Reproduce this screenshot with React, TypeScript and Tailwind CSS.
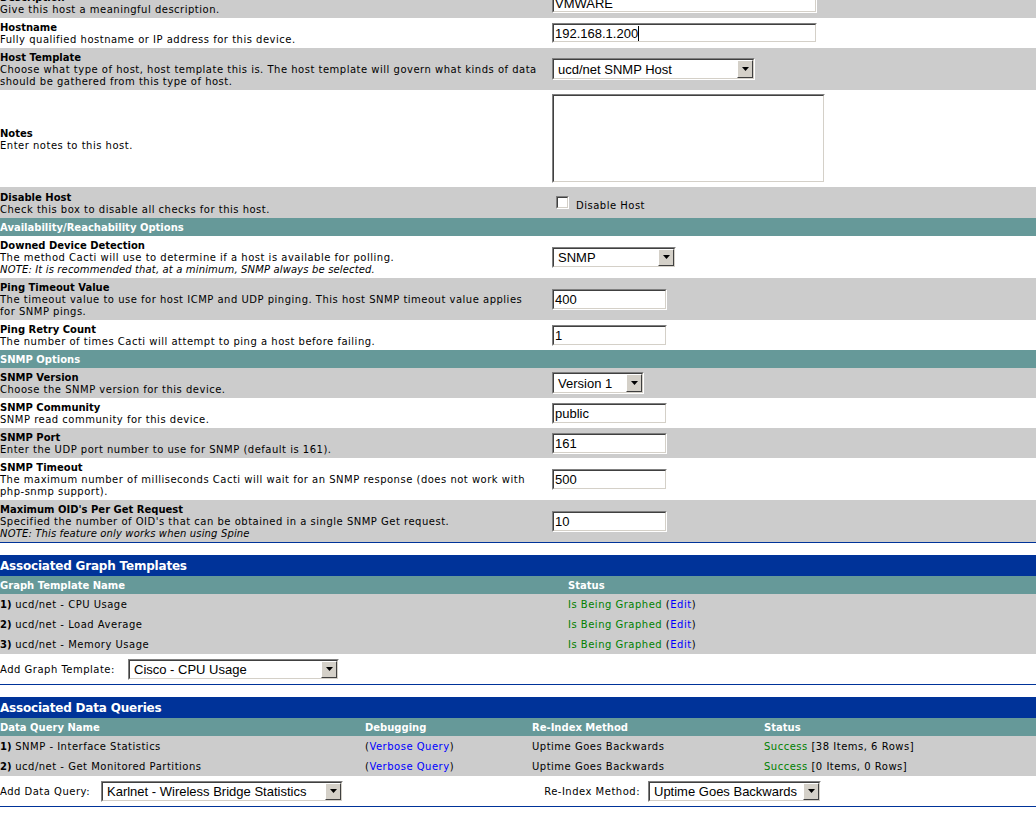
import React from "react";

function Arrow() {
  return (
    <div className="w-[16px] h-full bg-[#d4d0c8] border border-t-[#ffffff] border-l-[#ffffff] border-r-[#404040] border-b-[#404040] flex items-center justify-center">
      <svg width="7" height="4" viewBox="0 0 7 4">
        <path d="M0 0 H7 L3.5 4 Z" fill="#000" />
      </svg>
    </div>
  );
}

function Select({ className, text }: { className: string; text: string }) {
  return (
    <div className={`flex shrink-0 border border-t-[#808080] border-l-[#808080] border-r-[#ffffff] border-b-[#ffffff] ${className}`}>
      <div className="flex-1 flex border border-t-[#404040] border-l-[#404040] border-r-[#d4d0c8] border-b-[#d4d0c8] bg-white">
        <div className="flex-1 flex items-center pl-[4px] font-['Liberation_Sans',Arial,sans-serif] text-[13px] leading-[15px] tracking-normal text-black whitespace-nowrap overflow-hidden">
          {text}
        </div>
        <Arrow />
      </div>
    </div>
  );
}

function Input({ className, text, cursor }: { className: string; text: string; cursor?: boolean }) {
  return (
    <div className={`flex shrink-0 border border-t-[#808080] border-l-[#808080] border-r-[#ffffff] border-b-[#ffffff] ${className}`}>
      <div className="flex-1 flex items-center border border-t-[#404040] border-l-[#404040] border-r-[#d4d0c8] border-b-[#d4d0c8] bg-white pl-[1px] font-['Liberation_Sans',Arial,sans-serif] text-[13px] leading-[15px] tracking-normal text-black whitespace-nowrap overflow-hidden">
        {text}
        {cursor && <span className="w-px h-[15px] bg-black" />}
      </div>
    </div>
  );
}

function FormRow({
  gray,
  h,
  lines,
  children,
  extra,
}: {
  gray?: boolean;
  h: string;
  lines: React.ReactNode;
  children?: React.ReactNode;
  extra?: string;
}) {
  return (
    <div className={`flex items-center ${gray ? "bg-[#cccccc]" : "bg-white"} ${h} ${extra ?? ""}`}>
      <div className="w-[552px] shrink-0 pr-[3px] pt-[2px] whitespace-nowrap">{lines}</div>
      <div className="flex-1 flex items-center">{children}</div>
    </div>
  );
}

function T({ children }: { children: React.ReactNode }) {
  return <div className="font-bold tracking-normal">{children}</div>;
}

function Note({ children }: { children: React.ReactNode }) {
  return <div className="italic tracking-[0.15px]">{children}</div>;
}

function TealHeader({ children }: { children: React.ReactNode }) {
  return (
    <div className="h-[18px] bg-[#669999] flex items-center pt-[1px] text-white font-bold tracking-normal whitespace-nowrap">{children}</div>
  );
}

function BlueHeader({ children }: { children: React.ReactNode }) {
  return (
    <div className="h-[21px] bg-[#003399] flex items-center pt-[1px] text-white font-bold tracking-[-0.2px] text-[12px] leading-[14px] whitespace-nowrap">
      {children}
    </div>
  );
}

function Green({ children }: { children: React.ReactNode }) {
  return <span className="text-[#008000]">{children}</span>;
}

function Link({ children }: { children: React.ReactNode }) {
  return <span className="text-[#0000ff]">{children}</span>;
}

export default function App() {
  return (
    <div className="w-[1036px] h-[818px] overflow-hidden bg-white text-black font-['DejaVu_Sans',Verdana,sans-serif] text-[10px] leading-[12px] tracking-[0.5px]">
      {/* Host form */}
      <div>
        <FormRow
          gray
          h="h-[30px]"
          extra="-mt-[12px]"
          lines={
            <>
              <T>Description</T>
              <div>Give this host a meaningful description.</div>
            </>
          }
        >
          <Input className="w-[265px] h-[20px]" text="VMWARE" />
        </FormRow>
        <FormRow
          h="h-[30px]"
          lines={
            <>
              <T>Hostname</T>
              <div>Fully qualified hostname or IP address for this device.</div>
            </>
          }
        >
          <Input className="w-[265px] h-[20px]" text="192.168.1.200" cursor />
        </FormRow>
        <FormRow
          gray
          h="h-[42px]"
          lines={
            <>
              <T>Host Template</T>
              <div>Choose what type of host, host template this is. The host template will govern what kinds of data</div>
              <div>should be gathered from this type of host.</div>
            </>
          }
        >
          <Select className="w-[203px] h-[22px]" text="ucd/net SNMP Host" />
        </FormRow>
        <FormRow
          h="h-[97px]"
          lines={
            <>
              <T>Notes</T>
              <div>Enter notes to this host.</div>
            </>
          }
        >
          <div className="w-[273px] h-[89px] flex border border-t-[#808080] border-l-[#808080] border-r-[#ffffff] border-b-[#ffffff]">
            <div className="flex-1 border border-t-[#404040] border-l-[#404040] border-r-[#d4d0c8] border-b-[#d4d0c8] bg-white" />
          </div>
        </FormRow>
        <div className="flex items-center bg-[#cccccc] h-[31px]">
          <div className="w-[552px] shrink-0 pr-[3px] pt-[2px] whitespace-nowrap">
            <T>Disable Host</T>
            <div>Check this box to disable all checks for this host.</div>
          </div>
          <div className="flex-1 self-stretch flex items-start pt-[9px] pl-[4px]">
            <div className="w-[13px] h-[13px] flex border border-t-[#808080] border-l-[#808080] border-r-[#ffffff] border-b-[#ffffff]">
              <div className="flex-1 border border-t-[#404040] border-l-[#404040] border-r-[#d4d0c8] border-b-[#d4d0c8] bg-white" />
            </div>
            <span className="ml-[7px] mt-[4px] whitespace-nowrap">Disable Host</span>
          </div>
        </div>
        <TealHeader>Availability/Reachability Options</TealHeader>
        <FormRow
          h="h-[42px]"
          lines={
            <>
              <T>Downed Device Detection</T>
              <div>The method Cacti will use to determine if a host is available for polling.</div>
              <Note>NOTE: It is recommended that, at a minimum, SNMP always be selected.</Note>
            </>
          }
        >
          <Select className="w-[124px] h-[21px]" text="SNMP" />
        </FormRow>
        <FormRow
          gray
          h="h-[42px]"
          lines={
            <>
              <T>Ping Timeout Value</T>
              <div>The timeout value to use for host ICMP and UDP pinging. This host SNMP timeout value applies</div>
              <div>for SNMP pings.</div>
            </>
          }
        >
          <Input className="w-[115px] h-[21px]" text="400" />
        </FormRow>
        <FormRow
          h="h-[30px]"
          lines={
            <>
              <T>Ping Retry Count</T>
              <div>The number of times Cacti will attempt to ping a host before failing.</div>
            </>
          }
        >
          <Input className="w-[115px] h-[21px]" text="1" />
        </FormRow>
        <TealHeader>SNMP Options</TealHeader>
        <FormRow
          gray
          h="h-[30px]"
          lines={
            <>
              <T>SNMP Version</T>
              <div>Choose the SNMP version for this device.</div>
            </>
          }
        >
          <Select className="w-[92px] h-[22px]" text="Version 1" />
        </FormRow>
        <FormRow
          h="h-[30px]"
          lines={
            <>
              <T>SNMP Community</T>
              <div>SNMP read community for this device.</div>
            </>
          }
        >
          <Input className="w-[115px] h-[21px]" text="public" />
        </FormRow>
        <FormRow
          gray
          h="h-[30px]"
          lines={
            <>
              <T>SNMP Port</T>
              <div>Enter the UDP port number to use for SNMP (default is 161).</div>
            </>
          }
        >
          <Input className="w-[115px] h-[21px]" text="161" />
        </FormRow>
        <FormRow
          h="h-[42px]"
          lines={
            <>
              <T>SNMP Timeout</T>
              <div>The maximum number of milliseconds Cacti will wait for an SNMP response (does not work with</div>
              <div>php-snmp support).</div>
            </>
          }
        >
          <Input className="w-[115px] h-[21px]" text="500" />
        </FormRow>
        <FormRow
          gray
          h="h-[42px]"
          lines={
            <>
              <T>Maximum OID's Per Get Request</T>
              <div>Specified the number of OID's that can be obtained in a single SNMP Get request.</div>
              <Note>NOTE: This feature only works when using Spine</Note>
            </>
          }
        >
          <Input className="w-[115px] h-[21px]" text="10" />
        </FormRow>
        <div className="h-px bg-[#003399]" />
      </div>

      <div className="h-[12px]" />

      {/* Associated Graph Templates */}
      <div>
        <BlueHeader>Associated Graph Templates</BlueHeader>
        <div className="h-[18px] bg-[#669999] grid grid-cols-[568px_1fr] items-center pt-[1px] text-white font-bold tracking-normal whitespace-nowrap">
          <div>Graph Template Name</div>
          <div>Status</div>
        </div>
        {[
          ["1)", "ucd/net - CPU Usage"],
          ["2)", "ucd/net - Load Average"],
          ["3)", "ucd/net - Memory Usage"],
        ].map(([n, name]) => (
          <div key={n} className="h-[20px] bg-[#cccccc] grid grid-cols-[568px_1fr] items-center pt-[1px] whitespace-nowrap">
            <div>
              <b className="tracking-normal">{n}</b> {name}
            </div>
            <div>
              <Green>Is Being Graphed</Green> (<Link>Edit</Link>)
            </div>
          </div>
        ))}
        <div className="h-[30px] flex items-center bg-white whitespace-nowrap">
          <div className="w-[128px] shrink-0 pt-[2px]">Add Graph Template:</div>
          <Select className="w-[211px] h-[21px]" text="Cisco - CPU Usage" />
        </div>
        <div className="h-px bg-[#003399]" />
      </div>

      <div className="h-[12px]" />

      {/* Associated Data Queries */}
      <div>
        <BlueHeader>Associated Data Queries</BlueHeader>
        <div className="h-[18px] bg-[#669999] grid grid-cols-[365px_167px_232px_1fr] items-center pt-[1px] text-white font-bold tracking-normal whitespace-nowrap">
          <div>Data Query Name</div>
          <div>Debugging</div>
          <div>Re-Index Method</div>
          <div>Status</div>
        </div>
        {[
          ["1)", "SNMP - Interface Statistics", "[38 Items, 6 Rows]"],
          ["2)", "ucd/net - Get Monitored Partitions", "[0 Items, 0 Rows]"],
        ].map(([n, name, st]) => (
          <div key={n} className="h-[20px] bg-[#cccccc] grid grid-cols-[365px_167px_232px_1fr] items-center pt-[1px] whitespace-nowrap">
            <div>
              <b className="tracking-normal">{n}</b> {name}
            </div>
            <div>
              (<Link>Verbose Query</Link>)
            </div>
            <div>Uptime Goes Backwards</div>
            <div>
              <Green>Success</Green> {st}
            </div>
          </div>
        ))}
        <div className="h-[30px] flex items-center bg-white whitespace-nowrap">
          <div className="w-[101px] shrink-0 pt-[2px]">Add Data Query:</div>
          <Select className="w-[242px] h-[21px]" text="Karlnet - Wireless Bridge Statistics" />
          <div className="w-[297px] shrink-0 text-right pt-[2px]">Re-Index Method:</div>
          <div className="w-[8px] shrink-0" />
          <Select className="w-[173px] h-[21px]" text="Uptime Goes Backwards" />
        </div>
        <div className="h-px bg-[#003399]" />
      </div>
    </div>
  );
}
